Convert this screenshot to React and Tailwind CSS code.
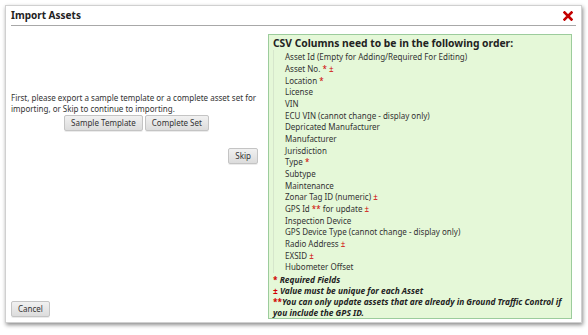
import React from 'react';

const columns = [
  { label: 'Asset Id (Empty for Adding/Required For Editing)' },
  { label: 'Asset No.', req: true, uniq: true },
  { label: 'Location', req: true },
  { label: 'License' },
  { label: 'VIN' },
  { label: 'ECU VIN (cannot change - display only)' },
  { label: 'Depricated Manufacturer' },
  { label: 'Manufacturer' },
  { label: 'Jurisdiction' },
  { label: 'Type', req: true },
  { label: 'Subtype' },
  { label: 'Maintenance' },
  { label: 'Zonar Tag ID (numeric)', uniq: true },
  { label: 'GPS Id', gps: true, uniq: true },
  { label: 'Inspection Device' },
  { label: 'GPS Device Type (cannot change - display only)' },
  { label: 'Radio Address', uniq: true },
  { label: 'EXSID', uniq: true },
  { label: 'Hubometer Offset' },
];

function Btn({ children, className = '' }) {
  return (
    <button
      className={`h-[16px] px-[6px] rounded-[2px] border border-[#c4c4c4] bg-gradient-to-b from-[#f1f1f1] to-[#dcdcdc] text-[8px] leading-none text-[#333] shadow-[0_1px_0_rgba(0,0,0,0.08)] ${className}`}
    >
      {children}
    </button>
  );
}

export default function App() {
  return (
    <div className="w-[588px] h-[335px] bg-white font-['Noto_Sans',sans-serif] text-[#333]">
      <div className="ml-[5px] mt-[5px] w-[577px] h-[318px] bg-white border border-[#d0d0d0] shadow-[1px_2px_4px_rgba(0,0,0,0.45)] flex flex-col px-[5px]">
        <div className="h-[24px] flex items-center justify-between border-b border-[#a8a8a8] pr-[3px]">
          <h1 className="text-[10px] font-bold text-[#222]">Import Assets</h1>
          <svg width="10" height="10" viewBox="0 0 10 10">
            <path d="M1.5 1.5 L8.5 8.5 M8.5 1.5 L1.5 8.5" stroke="#c40000" strokeWidth="2.6" strokeLinecap="square" />
          </svg>
        </div>

        <div className="flex flex-1 pt-[8px] pb-[3px]">
          <div className="w-[251px] flex flex-col pt-[58px] pb-[1px]">
            <p className="text-[8px] leading-[11px]">
              First, please export a sample template or a complete asset set for importing, or Skip to continue to importing.
            </p>
            <div className="flex justify-center gap-[2px] mt-[1px]">
              <Btn>Sample Template</Btn>
              <Btn>Complete Set</Btn>
            </div>
            <div className="flex justify-end mt-[17px] pr-[4px]">
              <Btn>Skip</Btn>
            </div>
            <div className="mt-auto">
              <Btn>Cancel</Btn>
            </div>
          </div>

          <div className="ml-[6px] flex-1 mr-[4px] border border-[#9ccc9c] bg-[#e5f8d8] px-[4px] pt-[2px]">
            <h2 className="text-[10.3px] leading-[13px] font-bold text-[#222]">CSV Columns need to be in the following order:</h2>
            <ul className="border-l border-[#d6e6cc] pl-[11px] pt-[1px]">
              {columns.map((c) => (
                <li key={c.label} className="text-[8px] leading-[11.67px]">
                  {c.label}
                  {c.req && <span className="text-[#d00000]"> *</span>}
                  {c.gps && (
                    <>
                      <span className="text-[#d00000]"> **</span> for update
                    </>
                  )}
                  {c.uniq && <span className="text-[#d00000]"> ±</span>}
                </li>
              ))}
            </ul>
            <div className="text-[8.35px] leading-[11px] font-bold italic text-[#222] pt-[1px]">
              <p><span className="text-[#d00000] not-italic">*</span> Required Fields</p>
              <p><span className="text-[#d00000] not-italic">±</span> Value must be unique for each Asset</p>
              <p><span className="text-[#d00000] not-italic">**</span>You can only update assets that are already in Ground Traffic Control if you include the GPS ID.</p>
            </div>
          </div>
        </div>
      </div>
    </div>
  );
}
